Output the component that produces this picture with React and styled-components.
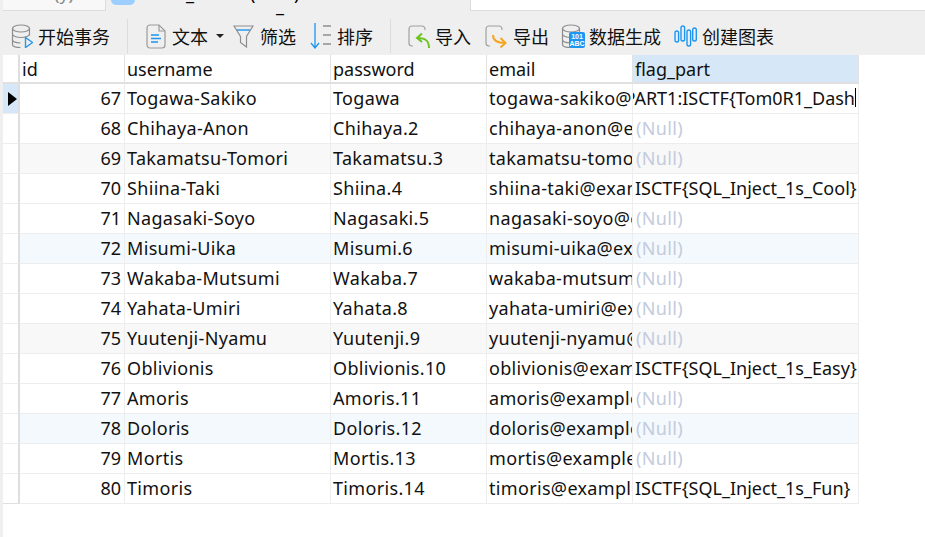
import React from "react";
import styled, { createGlobalStyle } from "styled-components";

const Global = createGlobalStyle`
  html, body { margin: 0; padding: 0; background: #fff; }
  body { width: 925px; height: 537px; overflow: hidden; font-family: "Noto Sans", "Noto Sans CJK SC", sans-serif; }
`;

const Page = styled.div`
  position: relative;
  width: 925px;
  height: 537px;
  display: flex;
  flex-direction: column;
  overflow: hidden;
  background: #fff;
`;

const TabStrip = styled.div`
  height: 11px;
  display: flex;
  background: #efefef;
  flex: none;
`;
const OtherTab = styled.div`
  box-sizing: border-box;
  width: 103px;
  margin-left: 3px;
  background: #f8f8f8;
  border-right: 1px solid #dcdcdc;
  border-bottom: 1px solid #dcdcdc;
`;
const TabIcon = styled.div`
  width: 24px;
  height: 5px;
  margin-left: 5px;
  background: #9ccfff;
  border-radius: 0 0 5px 5px;
`;
const TabGap = styled.div`
  width: 335px;
`;
const TabFill = styled.div`
  flex: 1;
  background: #fff;
  border-left: 1px solid #dcdcdc;
  border-bottom: 1px solid #dcdcdc;
`;
const TabSpeck = styled.span`
  position: absolute;
  left: ${(p) => p.$x}px;
  top: ${(p) => p.$y}px;
  font-size: 18px;
  line-height: 20px;
  color: ${(p) => p.$color || "#000"};
`;

const Toolbar = styled.div`
  box-sizing: border-box;
  height: 44px;
  flex: none;
  background: #efefef;
  display: flex;
  align-items: center;
  padding: 6px 0 0 11px;
`;
const Tool = styled.div`
  display: flex;
  align-items: center;
  gap: ${(p) => p.$gap}px;
  margin-right: ${(p) => p.$mr ?? 0}px;
  font-size: 18px;
  color: #111;
  white-space: nowrap;
  svg { flex: none; display: block; }
`;
const Sep = styled.div`
  width: 1px;
  height: 34px;
  background: #dcdcdc;
  margin: 0 ${(p) => p.$r}px 0 ${(p) => p.$l}px;
`;
const Caret = styled.span`
  width: 0;
  height: 0;
  margin: 0 9px 0 2px;
  border-left: 4px solid transparent;
  border-right: 4px solid transparent;
  border-top: 4px solid #222;
`;

const Body = styled.div`
  flex: 1;
  display: flex;
  min-height: 0;
`;
const LeftGutter = styled.div`
  width: 3px;
  background: #efefef;
  flex: none;
`;
const Table = styled.div`
  width: 856px;
  flex: none;
  display: grid;
  grid-template-columns: 17px 105px 206px 156px 146px 226px;
  grid-template-rows: 29px;
  grid-auto-rows: 30px;
  align-content: start;
  font-size: 18px;
  color: #111;
`;
const Cell = styled.div`
  box-sizing: border-box;
  overflow: hidden;
  white-space: nowrap;
  padding: 0 ${(p) => (p.$num ? 3 : 2)}px 2px ${(p) => (p.$null ? 3 : 2)}px;
  display: flex;
  align-items: center;
  justify-content: ${(p) => (p.$num || p.$end ? "flex-end" : "flex-start")};
  border-right: 1px solid #ededed;
  border-bottom: 1px solid #ededed;
  background: ${(p) => p.$bg || "#fff"};
  color: ${(p) => (p.$null ? "#c3cbde" : "#111")};
  letter-spacing: ${(p) => (p.$wide || p.$null ? "0.33px" : "0")};
  line-height: 24px;
`;
const Head = styled(Cell)`
  padding-bottom: 0;
  border-right: 1px solid #e2e2e2;
  border-bottom: 2px solid #e0e0e0;
  background: ${(p) => (p.$active ? "#d6e8f8" : "#fff")};
`;
const Marker = styled.div`
  box-sizing: border-box;
  border-right: 2px solid #dedede;
  border-bottom: ${(p) => (p.$head ? 2 : 1)}px solid ${(p) => (p.$strong ? "#e0e0e0" : "#ededed")};
  background: ${(p) => (p.$active ? "#d6e8f8" : "#fff")};
  display: flex;
  align-items: center;
  padding-left: 5px;
`;
const Arrow = styled.span`
  width: 0;
  height: 0;
  border-top: 7px solid transparent;
  border-bottom: 7px solid transparent;
  border-left: 9px solid #000;
`;
const TextCursor = styled.span`
  width: 1px;
  height: 19px;
  background: #000;
  flex: none;
`;

const Cylinder = () => (
  <>
    <ellipse cx="10" cy="4.500" rx="8.500" ry="3.500" stroke="#8e8e8e" strokeWidth="1.2" />
    <path d="M1.500 4.500v16c0 1.800 3.500 3 8 3.200M18.500 4.500v7M1.500 10c0 2 3.800 3.500 8.500 3.500s8.500-1.500 8.500-3.500M1.500 15.500c0 2 3.500 3.300 8 3.500" stroke="#8e8e8e" strokeWidth="1.2" />
  </>
);

const rows = [
  [67, "Togawa-Sakiko", "Togawa", "togawa-sakiko@example.com"],
  [68, "Chihaya-Anon", "Chihaya.2", "chihaya-anon@example.com"],
  [69, "Takamatsu-Tomori", "Takamatsu.3", "takamatsu-tomori@example.com"],
  [70, "Shiina-Taki", "Shiina.4", "shiina-taki@example.com"],
  [71, "Nagasaki-Soyo", "Nagasaki.5", "nagasaki-soyo@example.com"],
  [72, "Misumi-Uika", "Misumi.6", "misumi-uika@example.com"],
  [73, "Wakaba-Mutsumi", "Wakaba.7", "wakaba-mutsumi@example.com"],
  [74, "Yahata-Umiri", "Yahata.8", "yahata-umiri@example.com"],
  [75, "Yuutenji-Nyamu", "Yuutenji.9", "yuutenji-nyamu@example.com"],
  [76, "Oblivionis", "Oblivionis.10", "oblivionis@example.com"],
  [77, "Amoris", "Amoris.11", "amoris@example.com"],
  [78, "Doloris", "Doloris.12", "doloris@example.com"],
  [79, "Mortis", "Mortis.13", "mortis@example.com"],
  [80, "Timoris", "Timoris.14", "timoris@example.com"],
];
const flags = {
  67: "PART1:ISCTF{Tom0R1_Dash",
  70: "ISCTF{SQL_Inject_1s_Cool}",
  76: "ISCTF{SQL_Inject_1s_Easy}",
  80: "ISCTF{SQL_Inject_1s_Fun}",
};
const tints = { 69: "#f8f8f8", 72: "#f4f9fd", 75: "#f8f8f8", 78: "#f4f9fd" };

export default function App() {
  return (
    <Page>
      <Global />
      <TabStrip>
        <OtherTab />
        <TabIcon />
        <TabGap />
        <TabFill />
      </TabStrip>
      <TabSpeck $x={54} $y={-17} $color="#888">(y)</TabSpeck>
      <TabSpeck $x={186} $y={-17}>_</TabSpeck>
      <TabSpeck $x={250} $y={-17}>(</TabSpeck>
      <TabSpeck $x={276} $y={-5}>_</TabSpeck>
      <TabSpeck $x={294} $y={-17}>)</TabSpeck>
      <Toolbar>
        <Tool $gap={5}>
          <svg width="22" height="24" viewBox="0 0 22 24" fill="none">
            <Cylinder />
            <path d="M14.500 13.500l7 5-7 5z" stroke="#2a96ea" strokeWidth="1.4" fill="#efefef" />
          </svg>
          <span>开始事务</span>
        </Tool>
        <Sep $l={17} $r={18} />
        <Tool $gap={6}>
          <svg width="20" height="25" viewBox="0 0 20 25" fill="none">
            <path d="M4 1h9l6 6v14a3 3 0 0 1-3 3H4a3 3 0 0 1-3-3V4a3 3 0 0 1 3-3z" stroke="#9a9a9a" strokeWidth="1.2" />
            <path d="M13 1v6h6" stroke="#9a9a9a" strokeWidth="1.2" />
            <path d="M5 11h8M5 14.500h10M5 18h7" stroke="#1e96f0" strokeWidth="1.4" />
          </svg>
          <span>文本</span>
          <Caret />
        </Tool>
        <Tool $gap={6} $mr={14}>
          <svg width="21" height="23" viewBox="0 0 21 23" fill="none">
            <path d="M1 1h19l-6.500 10.500v10.500l-6-4.500v-6z" stroke="#8e8e8e" strokeWidth="1.2" />
            <path d="M4 5h13" stroke="#1e96f0" strokeWidth="1.4" />
          </svg>
          <span>筛选</span>
        </Tool>
        <Tool $gap={6}>
          <svg width="21" height="26" viewBox="0 0 21 26" fill="none">
            <path d="M5 0v25M1 20l4 5 4-5" stroke="#1e96f0" strokeWidth="1.3" />
            <path d="M13 3h8M13 12h8M13 21h8" stroke="#8e8e8e" strokeWidth="1.3" />
          </svg>
          <span>排序</span>
        </Tool>
        <Sep $l={17} $r={17} />
        <Tool $gap={5} $mr={14}>
          <svg width="22" height="23" viewBox="0 0 22 23" fill="none">
            <path d="M17 5V4a3 3 0 0 0-3-3H4a3 3 0 0 0-3 3v14a3 3 0 0 0 3 3h1" stroke="#a0a0a0" strokeWidth="1.2" />
            <path d="M21 23c0-7-3-10-11-10M14 8.500l-5 4.500 5 4" stroke="#6bc31e" strokeWidth="2" />
          </svg>
          <span>导入</span>
        </Tool>
        <Tool $gap={6} $mr={12}>
          <svg width="22" height="23" viewBox="0 0 22 23" fill="none">
            <path d="M17 5V4a3 3 0 0 0-3-3H4a3 3 0 0 0-3 3v14a3 3 0 0 0 3 3h1" stroke="#a0a0a0" strokeWidth="1.2" />
            <path d="M8 10c0 5 3 8 12 8M15.500 13l5 5-5 4.500" stroke="#f5a623" strokeWidth="2" />
          </svg>
          <span>导出</span>
        </Tool>
        <Tool $gap={4} $mr={13}>
          <svg width="24" height="24" viewBox="0 0 24 24" fill="none">
            <Cylinder />
            <rect x="8" y="8" width="16" height="16" rx="2" fill="#1e96f0" />
            <text x="16" y="15" fontSize="7" fontWeight="700" fill="#fff" textAnchor="middle" fontFamily="Liberation Sans, sans-serif">101</text>
            <text x="16" y="22" fontSize="7" fontWeight="700" fill="#fff" textAnchor="middle" fontFamily="Liberation Sans, sans-serif">ABC</text>
          </svg>
          <span>数据生成</span>
        </Tool>
        <Tool $gap={5}>
          <svg width="23" height="22" viewBox="0 0 23 22" fill="none" stroke="#1e96f0" strokeWidth="1.4">
            <rect x="1" y="6" width="3.600" height="11" rx="1.800" />
            <rect x="7" y="1" width="3.600" height="15" rx="1.800" />
            <rect x="13" y="5" width="3.600" height="16" rx="1.800" />
            <rect x="18.700" y="3" width="3.600" height="13" rx="1.800" />
          </svg>
          <span>创建图表</span>
        </Tool>
      </Toolbar>
      <Body>
        <LeftGutter />
        <Table>
          <Marker $head $strong />
          <Head>id</Head>
          <Head>username</Head>
          <Head>password</Head>
          <Head>email</Head>
          <Head $active>flag_part</Head>
          {rows.map(([id, user, pass, mail], i) => {
            const bg = tints[id];
            const flag = flags[id];
            return (
              <React.Fragment key={id}>
                <Marker $active={i === 0} $strong={i === rows.length - 1}>
                  {i === 0 && <Arrow />}
                </Marker>
                <Cell $num $bg={bg}>{id}</Cell>
                <Cell $wide $bg={bg}>{user}</Cell>
                <Cell $wide $bg={bg}>{pass}</Cell>
                <Cell $wide $bg={bg}>{mail}</Cell>
                {flag ? (
                  <Cell $bg={bg} $end={i === 0}>
                    {flag}
                    {i === 0 && <TextCursor />}
                  </Cell>
                ) : (
                  <Cell $bg={bg} $null>(Null)</Cell>
                )}
              </React.Fragment>
            );
          })}
        </Table>
      </Body>
    </Page>
  );
}
